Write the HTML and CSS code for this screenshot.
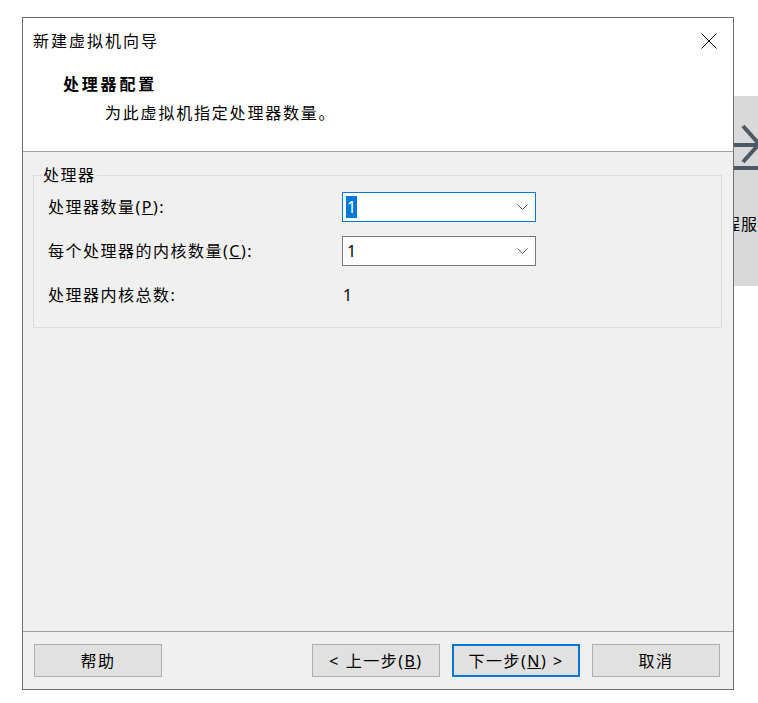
FILE: index.html
```html
<!DOCTYPE html>
<html lang="zh-CN">
<head>
<meta charset="utf-8">
<title>新建虚拟机向导</title>
<link rel="stylesheet" href="styles.css">
</head>
<body>
<div class="desktop">
  <div class="tile">
    <svg class="tile-icon" width="118" height="80" viewBox="0 0 118 80">
      <line x1="60" y1="49" x2="117" y2="49" stroke="#4b5a66" stroke-width="4"/>
      <polyline points="103,30 119,48 103,66" fill="none" stroke="#4b5a66" stroke-width="4"/>
      <rect x="0" y="70" width="118" height="4" fill="#4b5a66"/>
    </svg>
    <div class="tile-text">连接远程服务器</div>
  </div>

  <div class="dialog">
    <div class="titlebar">
      <span class="title">新建虚拟机向导</span>
      <svg class="close" width="16" height="16" viewBox="0 0 16 16">
        <line x1="0.5" y1="0.5" x2="15.5" y2="15.5" stroke="#000" stroke-width="1"/>
        <line x1="15.5" y1="0.5" x2="0.5" y2="15.5" stroke="#000" stroke-width="1"/>
      </svg>
    </div>
    <div class="header">
      <div class="header-title">处理器配置</div>
      <div class="header-sub">为此虚拟机指定处理器数量。</div>
    </div>
    <div class="main">
      <div class="group">
        <div class="legend">处理器</div>
        <div class="grid">
          <div class="label">处理器数量(<u>P</u>):</div>
          <div class="combo focused">
            <span class="value selected">1</span>
            <svg class="chev" width="11" height="6" viewBox="0 0 11 6"><polyline points="0.5,0.5 5.5,5.5 10.5,0.5" fill="none" stroke="#5f5f5f" stroke-width="1"/></svg>
          </div>
          <div class="label">每个处理器的内核数量(<u>C</u>):</div>
          <div class="combo">
            <span class="value">1</span>
            <svg class="chev" width="11" height="6" viewBox="0 0 11 6"><polyline points="0.5,0.5 5.5,5.5 10.5,0.5" fill="none" stroke="#5f5f5f" stroke-width="1"/></svg>
          </div>
          <div class="label">处理器内核总数:</div>
          <div class="total">1</div>
        </div>
      </div>
    </div>
    <div class="footer">
      <button class="btn">帮助</button>
      <button class="btn push">&lt; 上一步(<u>B</u>)</button>
      <button class="btn default">下一步(<u>N</u>) &gt;</button>
      <button class="btn">取消</button>
    </div>
  </div>
</div>
</body>
</html>
```
FILE: styles.css
```css
html, body {
  margin: 0;
  padding: 0;
  background: #ffffff;
  overflow: hidden;
}
body {
  font-family: "Noto Sans", "Noto Sans CJK SC", sans-serif;
  font-size: 16px;
  color: #000;
  letter-spacing: 1.5px;
}
.desktop {
  position: relative;
  width: 758px;
  height: 703px;
  box-sizing: border-box;
  padding: 17px 0 0 22px;
}
.tile {
  position: absolute;
  left: 640px;
  top: 96px;
  width: 118px;
  height: 190px;
  background: #d9d9d9;
  overflow: hidden;
}
.tile-icon {
  display: block;
}
.tile-text {
  margin-top: 38px;
  padding-left: 33px;
  white-space: nowrap;
  letter-spacing: 1px;
  line-height: 20px;
}
.dialog {
  position: relative;
  z-index: 1;
  width: 712px;
  height: 673px;
  box-sizing: border-box;
  border: 1px solid #6e6e6e;
  background: #f0f0f0;
  display: flex;
  flex-direction: column;
}
.titlebar {
  height: 45px;
  background: #fff;
  display: flex;
  align-items: center;
  justify-content: space-between;
  padding: 0 16px 0 10px;
}
.title {
  line-height: 20px;
  letter-spacing: 2px;
}
.close {
  display: block;
}
.header {
  height: 88px;
  background: #fff;
  border-bottom: 1px solid #a0a0a0;
}
.header-title {
  font-weight: bold;
  line-height: 20px;
  padding: 11px 0 0 40px;
  letter-spacing: 2.8px;
}
.header-sub {
  line-height: 20px;
  margin-top: 9px;
  padding-left: 82px;
  letter-spacing: 1.8px;
}
.main {
  flex: 1;
  padding: 23px 11px 0 10px;
}
.group {
  border: 1px solid #dcdcdc;
  padding: 0 0 17px 14px;
}
.legend {
  width: max-content;
  line-height: 20px;
  margin: -11px 0 7px -6px;
  padding: 0 1px;
  background: #f0f0f0;
}
.grid {
  display: grid;
  grid-template-columns: 294px 194px;
  grid-auto-rows: 30px;
  row-gap: 14px;
  align-items: center;
}
.label {
  line-height: 20px;
  white-space: nowrap;
}
.combo {
  height: 30px;
  box-sizing: border-box;
  border: 1px solid #7a7a7a;
  background: #fff;
  display: flex;
  align-items: center;
  justify-content: space-between;
  padding: 0 7px 0 3px;
}
.combo.focused {
  border-color: #0078d7;
}
.value {
  line-height: 22px;
  padding: 0 1px;
  letter-spacing: 0;
}
.value.selected {
  background: #0078d7;
  color: #fff;
}
.chev {
  display: block;
}
.total {
  padding-left: 1px;
  letter-spacing: 0;
  line-height: 20px;
}
.footer {
  height: 58px;
  box-sizing: border-box;
  border-top: 1px solid #a0a0a0;
  display: flex;
  align-items: flex-start;
  padding: 12px 13px 0 11px;
}
.btn {
  width: 128px;
  height: 33px;
  box-sizing: border-box;
  background: #e1e1e1;
  border: 1px solid #adadad;
  font-family: inherit;
  font-size: 16px;
  letter-spacing: 1.5px;
  color: #000;
  padding: 0;
  margin: 0 0 0 12px;
  line-height: 20px;
}
.btn:first-child {
  margin-left: 0;
}
.btn.push {
  margin-left: auto;
}
.btn.default {
  border: 2px solid #0078d7;
}
```
